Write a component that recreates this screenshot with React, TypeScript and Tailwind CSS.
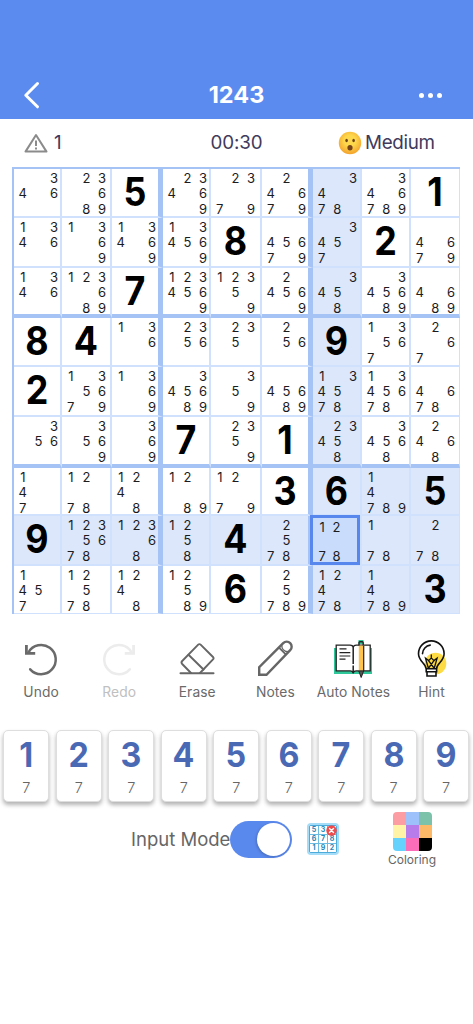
import clsx from "clsx";
import type { ReactNode } from "react";

// "=5" is a given digit, anything else is the list of pencil marks
const board = [
  ["346", "23689", "=5", "23469", "2379", "24679", "3478", "346789", "=1"],
  ["1346", "1369", "13469", "134569", "=8", "45679", "3457", "=2", "4679"],
  ["1346", "123689", "=7", "1234569", "12359", "24569", "3458", "345689", "4689"],
  ["=8", "=4", "136", "2356", "235", "256", "=9", "13567", "267"],
  ["=2", "135679", "1369", "345689", "359", "45689", "134578", "1345678", "4678"],
  ["356", "3569", "369", "=7", "2359", "=1", "23458", "34568", "2468"],
  ["147", "1278", "1248", "1289", "1279", "=3", "=6", "14789", "=5"],
  ["=9", "1235678", "12368", "1258", "=4", "2578", "1278", "178", "278"],
  ["1457", "12578", "1248", "12589", "=6", "25789", "12478", "14789", "=3"],
];

const digits = [1, 2, 3, 4, 5, 6, 7, 8, 9];
const selected = { row: 7, col: 6 };

const swatches = [
  "bg-[#fb9da3]", "bg-[#9dc1fb]", "bg-[#7cc2ab]",
  "bg-[#fff3a8]", "bg-[#b77bea]", "bg-[#fdb968]",
  "bg-[#64d2fd]", "bg-[#fc6db9]", "bg-black",
];

function isHighlighted(row: number, col: number) {
  const sameBox =
    Math.floor(row / 3) === Math.floor(selected.row / 3) &&
    Math.floor(col / 3) === Math.floor(selected.col / 3);
  return row === selected.row || col === selected.col || sameBox;
}

function Notes({ value, small }: { value: string; small?: boolean }) {
  return (
    <div
      className={clsx(
        "grid text-center text-[13px] text-[#1c1c1e]",
        small
          ? "grid-cols-[repeat(3,14.3px)] grid-rows-[repeat(3,14.4px)] leading-[14.4px]"
          : "ml-px grid-cols-[repeat(3,15.6px)] grid-rows-[repeat(3,15.5px)] pt-[1.5px] leading-[15.5px]"
      )}
    >
      {digits.map((d) => (
        <span key={d}>{value.includes(String(d)) ? d : ""}</span>
      ))}
    </div>
  );
}

function Cell({ value, row, col }: { value: string; row: number; col: number }) {
  const isSelected = row === selected.row && col === selected.col;
  const given = value.startsWith("=");
  return (
    <div
      className={clsx(
        "relative min-h-0 min-w-0",
        isHighlighted(row, col) ? "bg-[#dde7fb]" : "bg-white",
        col === 8 ? "border-r" : col % 3 === 2 ? "border-r-[5px]" : "border-r-2",
        row === 8 ? "border-b" : row % 3 === 2 ? "border-b-4" : "border-b-2",
        col % 3 === 2 && col !== 8 ? "border-r-[#a5c3f5]" : "border-r-[#cfe1fc]",
        row % 3 === 2 && row !== 8 ? "border-b-[#a5c3f5]" : "border-b-[#cfe1fc]"
      )}
    >
      {isSelected ? (
        <div className="absolute -top-[1px] -left-[3px] z-10 h-[50px] w-[50px] border-[3px] border-[#5787ec] bg-[#c9dcfb] pt-[2px] pl-[2px]">
          <Notes value={value} small />
        </div>
      ) : given ? (
        <div className="flex h-[45px] scale-x-[0.92] items-center justify-center text-[39px] leading-none font-bold text-black">
          {value.slice(1)}
        </div>
      ) : (
        <Notes value={value} />
      )}
    </div>
  );
}

function UndoIcon() {
  return (
    <svg width="34" height="36" viewBox="0 0 34 36" fill="none" stroke="currentColor" strokeWidth="2.5">
      <path d="M6.2 29.3A14.6 14.6 0 1 0 4.5 12.3" strokeLinecap="round" />
      <path d="M2.4 5v8.4h8.8" strokeWidth="2.8" />
    </svg>
  );
}

function EraseIcon() {
  return (
    <svg width="36" height="36" viewBox="0 0 36 36" fill="none" stroke="#666" strokeWidth="1.9" strokeLinejoin="round" strokeLinecap="round">
      <path d="M1.5 33.2h33" strokeWidth="2" />
      <path d="M12 33 3.2 24q-1.4-1.5 0-3L19.2 4.7q1.2-1.2 2.4 0L34 17q1.2 1.2 0 2.4L21 33" />
      <path d="M9.5 14.8 24.5 29.5" />
    </svg>
  );
}

function PencilIcon() {
  return (
    <svg width="36" height="38" viewBox="0 0 36 38" fill="none" stroke="#666" strokeWidth="2.4">
      <path d="M2.2 35.8v-7.600L26.2 4.200a4.900 4.900 0 0 1 7 7L9.500 35.800Z" />
      <path d="M21.800 8.300 29.300 15.800" strokeWidth="1.900" />
      <path d="M24.700 5.700c0 4.500 2.500 7 7 7" strokeWidth="1.300" />
    </svg>
  );
}

function AutoNotesIcon() {
  return (
    <svg className="mt-[3px]" width="40" height="40" viewBox="0 0 40 40" fill="none">
      <path d="M1 8h38v26H1Z" fill="#2fc89b" />
      <path d="M25.500 0h5v4h-5Z" fill="#2fc89b" />
      <path d="M3.2 5.2h14q2.5 0 3 2 .5-2 3-2h14v25.7h-14q-2.5 0-3 2-.5-2-3-2h-14Z" fill="#fff" stroke="#222" strokeWidth="1.3" />
      <path d="M20.2 7v26.5" stroke="#222" strokeWidth="1.5" strokeDasharray="17 1.5" />
      <path d="M6.5 8.8h7M6.5 12.7h10.8M6.5 16h10.8M6.5 19.2h6" stroke="#222" strokeWidth="1.2" />
      <path d="M25.800 5.500h4.800v25h-4.800Z" fill="#fdc34e" />
      <path d="M30.700 6v25" stroke="#222" strokeWidth="1.2" />
      <path d="M26 5.500V2.800q0-1 1-1h2.200q1 0 1 1v2.700" stroke="#222" strokeWidth="1.400" />
      <path d="m25.800 31 2.400 6.500 2.400-6.500Z" fill="#555" stroke="#222" strokeWidth="1" />
    </svg>
  );
}

function HintIcon() {
  return (
    <svg className="mt-[2px]" width="30" height="38" viewBox="0 0 30 38" fill="none" stroke="#111" strokeWidth="1.6">
      <circle cx="18.500" cy="23.500" r="10.800" fill="#fddb45" stroke="none" />
      <path d="M9 28.500c0-5-7.500-7.300-7.500-14.800a12.800 12.800 0 0 1 25.600 0c0 7.500-7.500 9.800-7.500 14.800" />
      <path d="M5.500 13.600a9 9 0 0 1 7.700-8.500" strokeLinecap="round" />
      <path d="M11.300 28 8.500 18.200l3.200 2.400 2.600-2.700 2.600 2.700 3.200-2.400L17.300 28M11.500 20.600 17 28M17 20.600 11.600 28M14.300 14.500v4" strokeWidth="1.300" />
      <path d="M9.200 28.700h10.400v3H9.200ZM10 31.700h9v4.300h-9Z" fill="#fff" />
    </svg>
  );
}

function Tool({ label, children, muted }: { label: string; children: ReactNode; muted?: boolean }) {
  return (
    <div className={clsx("flex flex-col items-center", muted ? "text-[#c0c0c0]" : "text-[#6a6a6a]")}>
      <div className="flex h-[43px] items-center justify-center">{children}</div>
      <span className="mt-[2px] text-[13.8px] leading-5 tracking-[0.1px] whitespace-nowrap">{label}</span>
    </div>
  );
}

function SurprisedFace() {
  return (
    <svg width="24" height="24" viewBox="0 0 24 24">
      <defs>
        <radialGradient id="face" cx="50%" cy="40%" r="60%">
          <stop offset="0.4" stopColor="#fed84c" />
          <stop offset="1" stopColor="#f3a32c" />
        </radialGradient>
      </defs>
      <circle cx="12" cy="12" r="11.2" fill="url(#face)" />
      <ellipse cx="8.6" cy="9.5" rx="1.3" ry="1.7" fill="#6b421b" />
      <ellipse cx="15.6" cy="9.5" rx="1.3" ry="1.7" fill="#6b421b" />
      <ellipse cx="12" cy="16.7" rx="2.6" ry="2.7" fill="#76421a" />
    </svg>
  );
}

function MiniSudoku() {
  return (
    <div className="relative flex h-8 w-8 items-center justify-center rounded-[4px] bg-[#a5dcf8]">
      <div className="grid grid-cols-[repeat(3,8px)] grid-rows-[repeat(3,8px)] gap-px rounded-[2px] border border-[#4dabdc] bg-[#6bbbe3]">
        {["5", "3", "", "6", "7", "8", "1", "9", "2"].map((n, i) => (
          <span key={i} className="bg-white text-center text-[7px] leading-[8px] font-bold text-[#2685b6]">
            {n}
          </span>
        ))}
      </div>
      <svg className="absolute top-[2px] right-[2px]" width="11" height="11" viewBox="0 0 11 11">
        <circle cx="5.500" cy="5.500" r="5.200" fill="#ee4c4c" />
        <path d="m3.500 3.500 4 4m0-4-4 4" stroke="#fff" strokeWidth="1.400" strokeLinecap="round" />
      </svg>
    </div>
  );
}

export default function App() {
  return (
    <div className="h-[1024px] w-[473px] overflow-hidden bg-white font-['Inter','Liberation_Sans',sans-serif]">
      <header className="grid h-[119px] grid-cols-[120px_1fr_120px] items-center bg-[#5c8bf0] pt-[71px] text-white">
        <svg className="ml-[22px]" width="20" height="30" viewBox="0 0 20 30" fill="none" stroke="currentColor" strokeWidth="3" strokeLinecap="round" strokeLinejoin="round">
          <path d="M15.500 3.500 3.800 15.200l11.700 11.600" />
        </svg>
        <h1 className="text-center text-[23.5px] leading-6 font-bold">1243</h1>
        <div className="mr-[31px] flex gap-[4px] justify-self-end">
          <i className="h-[5px] w-[5px] rounded-full bg-white" />
          <i className="h-[5px] w-[5px] rounded-full bg-white" />
          <i className="h-[5px] w-[5px] rounded-full bg-white" />
        </div>
      </header>

      <div className="grid h-12 grid-cols-[150px_1fr_150px] items-center text-[18.8px] text-[#413a5c]">
        <div className="flex items-center gap-[6px] pl-[24px]">
          <svg width="24" height="20" viewBox="0 0 24 20" fill="none" stroke="#8b8b8b" strokeWidth="2" strokeLinejoin="round">
            <path d="M12 2 22.500 18.600h-21Z" />
            <path d="M12 7.500v5.500M12 14.500v2" />
          </svg>
          <span>1</span>
        </div>
        <span className="text-center tracking-[-0.1px]">00:30</span>
        <div className="flex items-center gap-[3px] pl-[15px]">
          <SurprisedFace />
          <span className="tracking-[-0.3px]">Medium</span>
        </div>
      </div>

      <div className="ml-3 grid w-[448px] grid-cols-[48px_50px_51px_48px_51px_51px_49px_49px_49px] grid-rows-[49px_50px_50px_49px_50px_51px_48px_50px_48px] border-t-2 border-l-2 border-[#a5c3f5]">
        {board.map((cells, row) =>
          cells.map((value, col) => <Cell key={`${row}-${col}`} value={value} row={row} col={col} />)
        )}
      </div>

      <div className="mx-[2px] mt-[22.5px] grid grid-cols-[repeat(6,78.1px)]">
        <Tool label="Undo"><UndoIcon /></Tool>
        <Tool label="Redo" muted>
          <span className="-scale-x-100 text-[#ececec]"><UndoIcon /></span>
        </Tool>
        <Tool label="Erase"><EraseIcon /></Tool>
        <Tool label="Notes"><PencilIcon /></Tool>
        <Tool label="Auto Notes"><AutoNotesIcon /></Tool>
        <Tool label="Hint"><HintIcon /></Tool>
      </div>

      <div className="mt-[28.5px] flex gap-[6.7px] pl-[3.4px]">
        {digits.map((n) => (
          <button key={n} className="flex h-[72px] w-[45.8px] shrink-0 flex-col items-center rounded-[5px] border border-[#dedede] bg-white shadow-[0_3px_4px_rgba(0,0,0,0.3)]">
            <span className="mt-[7px] scale-x-95 text-[34px] leading-[34px] font-bold text-[#4a69b5]">{n}</span>
            <span className="mt-[7px] text-[14.5px] leading-[18px] font-light text-[#666]">7</span>
          </button>
        ))}
      </div>

      <div className="mt-[9px] flex items-start pl-[131px]">
        <span className="mt-[16px] w-[99px] text-[18.5px] leading-6 whitespace-nowrap text-[#666]">Input Mode</span>
        <div className="mt-[10px] flex h-[37px] w-[62px] items-center justify-end rounded-full bg-[#5a89ee] pr-[2px]">
          <div className="h-[33px] w-[33px] rounded-full bg-white shadow-[-1px_1px_3px_rgba(0,0,0,0.2)]" />
        </div>
        <div className="mt-[12px] ml-[15px]">
          <MiniSudoku />
        </div>
        <div className="ml-[43px] flex w-[60px] flex-col items-center pt-[0.5px]">
          <div className="grid h-[39px] w-[39px] grid-cols-3 overflow-hidden rounded-[4px]">
            {swatches.map((color) => (
              <div key={color} className={color} />
            ))}
          </div>
          <span className="mt-[1.5px] text-[12px] leading-4 text-[#666]">Coloring</span>
        </div>
      </div>
    </div>
  );
}
